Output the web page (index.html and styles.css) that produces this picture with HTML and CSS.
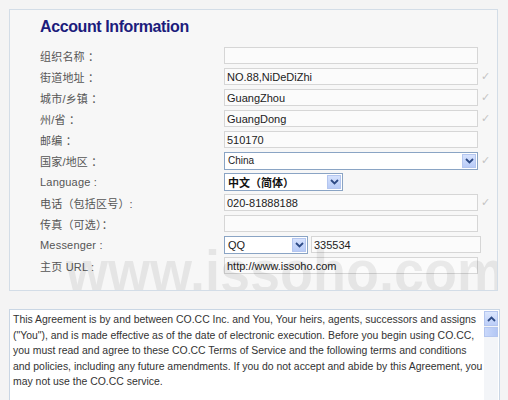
FILE: index.html
```html
<!DOCTYPE html>
<html lang="zh">
<head>
  <meta charset="UTF-8">
  <title>Account Information</title>
  <link rel="stylesheet" href="styles.css">
</head>
<body>
  <div class="panel">
    <h1>Account Information</h1>
    <div class="rows">
      <div class="row"><label>组织名称 ：</label><input class="field" value=""><span class="check"></span></div>
      <div class="row"><label>街道地址 ：</label><input class="field" value="NO.88,NiDeDiZhi"><span class="check">✓</span></div>
      <div class="row"><label>城市/乡镇 ：</label><input class="field" value="GuangZhou"><span class="check">✓</span></div>
      <div class="row"><label>州/省 ：</label><input class="field" value="GuangDong"><span class="check">✓</span></div>
      <div class="row"><label>邮编 ：</label><input class="field" value="510170"><span class="check"></span></div>
      <div class="row"><label>国家/地区 ：</label>
        <div class="select country"><span class="select-text small">China</span><span class="arrow"><svg width="9" height="6" viewBox="0 0 9 6"><path d="M1 1 L4.5 4.5 L8 1" fill="none" stroke="#2d4a85" stroke-width="1.8"/></svg></span></div>
        <span class="check">✓</span></div>
      <div class="row"><label>Language :</label>
        <div class="select language"><span class="select-text bold">中文（简体）</span><span class="arrow"><svg width="9" height="6" viewBox="0 0 9 6"><path d="M1 1 L4.5 4.5 L8 1" fill="none" stroke="#2d4a85" stroke-width="1.8"/></svg></span></div>
        <span class="check"></span></div>
      <div class="row"><label>电话（包括区号）:</label><input class="field" value="020-81888188"><span class="check">✓</span></div>
      <div class="row"><label>传真（可选）：</label><input class="field" value=""><span class="check"></span></div>
      <div class="row"><label>Messenger :</label>
        <div class="select messenger"><span class="select-text">QQ</span><span class="arrow"><svg width="9" height="6" viewBox="0 0 9 6"><path d="M1 1 L4.5 4.5 L8 1" fill="none" stroke="#2d4a85" stroke-width="1.8"/></svg></span></div>
        <input class="field im" value="335534"></div>
      <div class="row"><label>主页 URL :</label><input class="field" value="http://www.issoho.com"><span class="check"></span></div>
    </div>
    <div class="watermark">www.issoho.com</div>
  </div>

  <div class="agreement">
    <div class="agreement-text">
      This Agreement is by and between CO.CC Inc. and You, Your heirs, agents, successors and assigns<br>
      ("You"), and is made effective as of the date of electronic execution. Before you begin using CO.CC,<br>
      you must read and agree to these CO.CC Terms of Service and the following terms and conditions<br>
      and policies, including any future amendments. If you do not accept and abide by this Agreement, you<br>
      may not use the CO.CC service.
    </div>
    <div class="scrollbar">
      <span class="scroll-up"><svg width="9" height="6" viewBox="0 0 9 6"><path d="M1 5 L4.5 1.5 L8 5" fill="none" stroke="#2d4a85" stroke-width="1.8"/></svg></span>
      <span class="scroll-thumb"></span>
    </div>
  </div>
</body>
</html>
```

FILE: styles.css
```css
* {
  box-sizing: border-box;
}
body {
  margin: 0;
  background: #f4f4f4;
  font-family: 'Liberation Sans', Arial, 'Noto Sans CJK SC', sans-serif;
  color: #444;
  overflow: hidden;
}
.panel {
  position: relative;
  margin: 9px 0 0 9px;
  width: 489px;
  height: 282px;
  border: 1px solid #d3dde7;
  background: #f7f7f7;
  padding: 7px 0 0 30px;
  overflow: hidden;
}
h1 {
  margin: 0 0 8px 0;
  font-size: 16px;
  letter-spacing: -0.4px;
  line-height: 20px;
  font-weight: bold;
  color: #1c1c7c;
}
.row {
  display: flex;
  align-items: center;
  height: 21px;
  position: relative;
  z-index: 1;
}
.row label {
  width: 184px;
  flex: none;
  font-size: 11px;
  color: #555;
  letter-spacing: 0.2px;
}
.field {
  width: 254px;
  height: 17px;
  border: 1px solid #d6d6d6;
  background: #fbfbfb;
  font-family: 'Liberation Sans', Arial, sans-serif;
  font-size: 11px;
  color: #222;
  padding: 0 2px;
  margin: 0;
  outline: none;
}
.field.im {
  width: 170px;
  margin-left: 3px;
}
.check {
  width: 14px;
  margin-left: 3px;
  font-size: 11px;
  color: #c4c4c4;
  font-family: 'DejaVu Sans', sans-serif;
}
.select {
  display: flex;
  align-items: center;
  justify-content: space-between;
  height: 18px;
  border: 1px solid #8aa4c4;
  background: #fff;
  padding: 0 1px 0 3px;
}
.country {
  width: 254px;
}
.language {
  width: 119px;
}
.messenger {
  width: 84px;
}
.select-text {
  font-size: 11px;
  color: #222;
}
.select-text.small {
  font-size: 10px;
}
.select-text.bold {
  font-family: 'Noto Sans CJK SC', sans-serif;
  font-size: 11px;
  font-weight: bold;
  color: #111;
}
.arrow {
  display: flex;
  align-items: center;
  justify-content: center;
  width: 14px;
  height: 14px;
  background: linear-gradient(#d6e2fd, #b8cbf7);
  border: 1px solid #b4c6ef;
}
.watermark {
  position: absolute;
  left: 56px;
  top: 230px;
  font-family: 'Liberation Sans', Arial, sans-serif;
  font-weight: bold;
  font-size: 54px;
  color: rgba(0, 0, 0, 0.07);
  transform: scaleY(1.1);
  white-space: nowrap;
  z-index: 2;
  pointer-events: none;
}
.agreement {
  position: relative;
  margin: 18px 0 0 9px;
  width: 491px;
  height: 120px;
  border: 1px solid #c9d6e4;
  background: #fff;
  display: flex;
}
.agreement-text {
  flex: 1;
  min-width: 0;
  overflow: hidden;
  padding: 2px 0 0 3px;
  font-size: 10.45px;
  line-height: 15.5px;
  color: #333;
  white-space: nowrap;
}
.scrollbar {
  width: 14px;
  flex: none;
  margin: 1px 1px 0 0;
  background: #f3f5f8;
  display: flex;
  flex-direction: column;
}
.scroll-up {
  display: flex;
  align-items: center;
  justify-content: center;
  height: 15px;
  background: linear-gradient(#dbe6fd, #bccef8);
  border: 1px solid #b4c6ef;
}
.scroll-thumb {
  height: 10px;
  margin-top: 1px;
  background: linear-gradient(90deg, #c9d8fb, #b3c7f4);
  border: 1px solid #b4c6ef;
}
```
